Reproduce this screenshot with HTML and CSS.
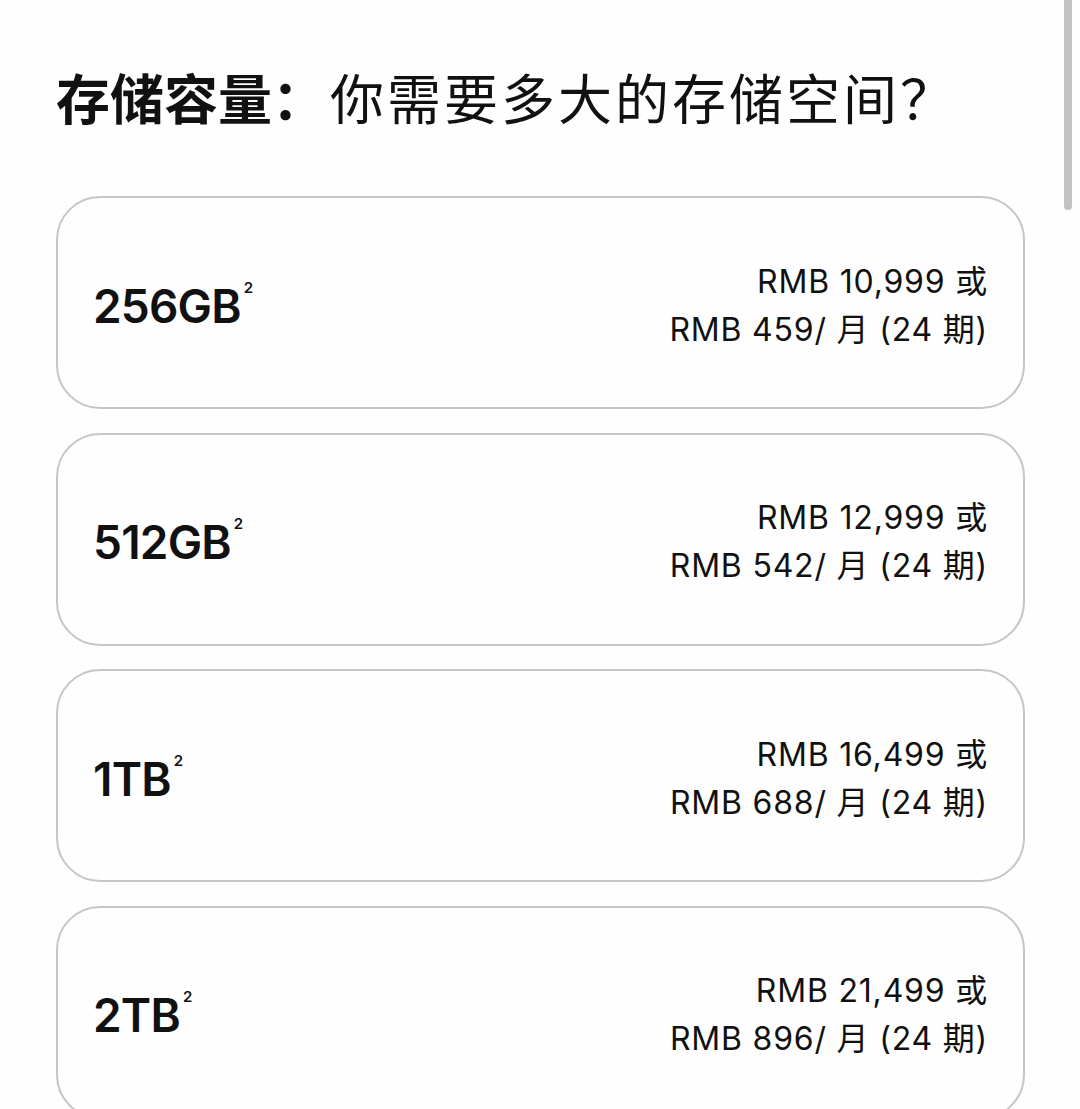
FILE: index.html
```html
<!DOCTYPE html>
<html lang="zh-CN">
<head>
  <meta charset="UTF-8" />
  <meta name="viewport" content="width=device-width, initial-scale=1.0" />
  <title>存储容量</title>
  <link rel="stylesheet" href="styles.css">
</head>
<body>

  <div class="scrollbar"></div>

  <main class="storage">
    <h2 class="storage-title"><b>存储容量：</b><span>你需要多大的存储空间？</span></h2>

    <div class="options">
      <div class="option">
        <div class="size">256GB<sup>2</sup></div>
        <div class="price">
          <div>RMB 10,999 或</div>
          <div>RMB 459/ 月 (24 期)</div>
        </div>
      </div>

      <div class="option">
        <div class="size">512GB<sup>2</sup></div>
        <div class="price">
          <div>RMB 12,999 或</div>
          <div>RMB 542/ 月 (24 期)</div>
        </div>
      </div>

      <div class="option">
        <div class="size">1TB<sup>2</sup></div>
        <div class="price">
          <div>RMB 16,499 或</div>
          <div>RMB 688/ 月 (24 期)</div>
        </div>
      </div>

      <div class="option">
        <div class="size">2TB<sup>2</sup></div>
        <div class="price">
          <div>RMB 21,499 或</div>
          <div>RMB 896/ 月 (24 期)</div>
        </div>
      </div>
    </div>
  </main>

</body>
</html>
```

FILE: styles.css
```css
* {
  box-sizing: border-box;
}

html, body {
  height: 100%;
  overflow: hidden;
}

body {
  margin: 0;
  background-color: #fefefe;
  color: #111;
  font-family: Inter, "Noto Sans CJK SC", sans-serif;
}

.scrollbar {
  position: fixed;
  top: 0;
  left: 1064px;
  width: 8px;
  height: 210px;
  background-color: #c2c2c2;
  border-radius: 0 0 4px 4px;
}

.storage {
  padding: 65px 55px 0 56px;
}

.storage-title {
  margin: 0 0 67px;
  font-family: "Noto Sans CJK SC", sans-serif;
  font-size: 54px;
  line-height: 64px;
  font-weight: 400;
  color: #111;
}

.storage-title b {
  font-weight: 700;
}

.storage-title span {
  margin-left: 4px;
  letter-spacing: 3px;
}

.options {
  display: flex;
  flex-direction: column;
  gap: 23.5px;
}

.option {
  display: flex;
  align-items: center;
  justify-content: space-between;
  height: 213px;
  padding: 0 35px 0 35px;
  border: 2px solid #c5c5ca;
  border-radius: 44px;
  background: #fefefe;
}

.size {
  font-size: 46px;
  font-weight: 600;
  letter-spacing: -0.8px;
  padding-top: 6px;
}

.size sup {
  font-size: 15px;
  font-weight: 600;
  vertical-align: 30px;
  line-height: 0;
  margin-left: 3px;
}

.price {
  text-align: right;
  font-size: 32px;
  line-height: 48px;
  font-weight: 400;
  letter-spacing: 0.8px;
  padding-top: 6px;
}
```
